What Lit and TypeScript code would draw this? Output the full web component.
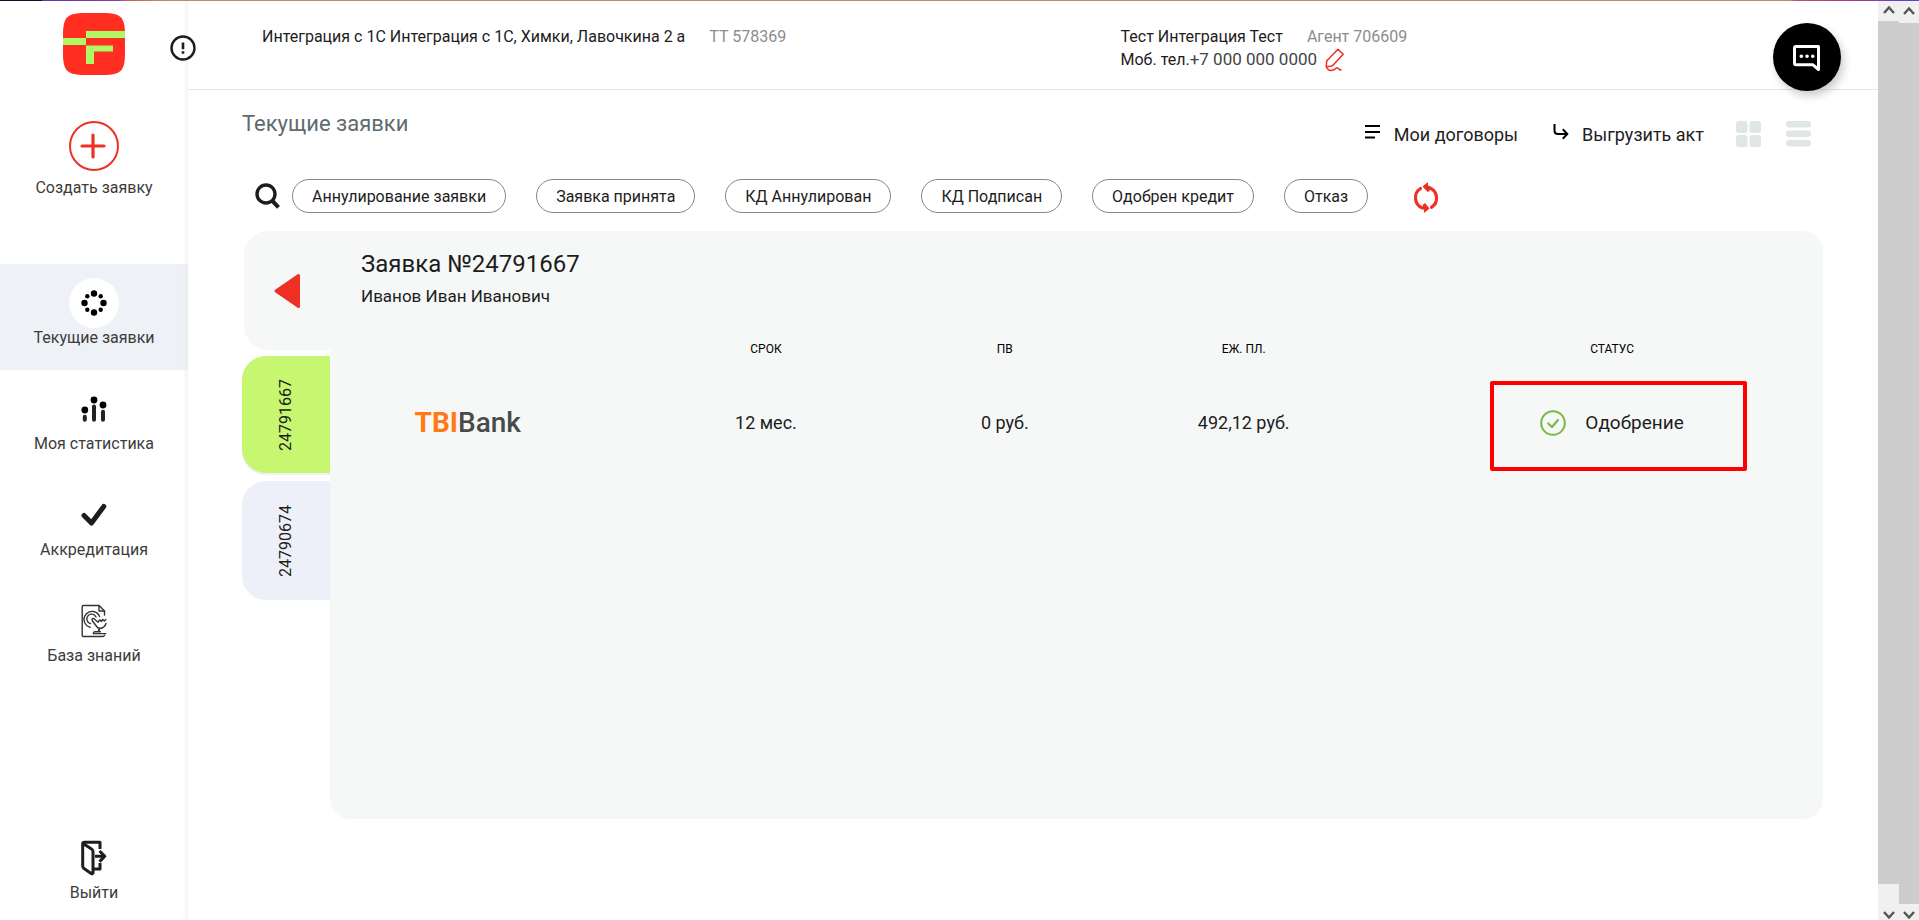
import { LitElement, html, css, svg } from "lit";
import { customElement, state } from "lit/decorators.js";
import { classMap } from "lit/directives/class-map.js";

const currentIcon = html`<svg width="26" height="26" viewBox="0 0 26 26" aria-hidden="true">
  <circle cx="13" cy="3.5" r="3.2" /><circle cx="13" cy="22.5" r="3.2" />
  <circle cx="3.5" cy="13" r="3.2" /><circle cx="22.5" cy="13" r="3.2" />
  <circle cx="6.3" cy="6.3" r="2.2" /><circle cx="19.7" cy="6.3" r="2.2" />
  <circle cx="6.3" cy="19.7" r="2.2" /><circle cx="19.7" cy="19.7" r="2.2" />
</svg>`;

const statsIcon = html`<svg width="26" height="26" viewBox="0 0 26 26" aria-hidden="true">
  <circle cx="3.8" cy="14" r="3.4" /><circle cx="13" cy="4" r="3.4" /><circle cx="22" cy="9" r="3.4" />
  <path d="M3.8 20.8v3M13 10.5v13.3M22 15.8v8" stroke="#222" stroke-width="4" stroke-linecap="round" />
</svg>`;

const checkIcon = html`<svg width="26" height="24" viewBox="0 0 26 24" aria-hidden="true">
  <path d="M3 12.5l7.5 7.5L22.8 3.4" fill="none" stroke="#1d1d1d" stroke-width="5" stroke-linecap="round" stroke-linejoin="round" />
</svg>`;

const knowledgeIcon = html`<svg width="26" height="34" viewBox="0 0 26 34" fill="none" stroke="#333" stroke-width="1.4" stroke-linecap="round" stroke-linejoin="round" aria-hidden="true">
  <path d="M23.5 11V7L18 1.500H2.500Q1.200 1.500 1.200 2.800V31.200Q1.200 32.500 2.500 32.500H21.500Q23 32.500 23.500 31.200" />
  <path d="M18 1.500V7h5.500" />
  <path d="M9.200 23.200A8 8 0 1 1 18.500 12.500M9.500 19.600A4.800 4.800 0 1 1 15 13" />
  <path d="M25 19.500q-1.500 4.500-6 5l-1.500 1.800 1.800 1.500h-5.500q-1.500 0-1.500 1.800h12.500M19 24.500l-2.500-1-5.200-6.800q-.8-1.500.3-2.200 1-.4 2 .7l3.500 3 1.500-2.300 1.800 1.500 1.300-1.900 1.600 1.400 1.500-1.400" />
</svg>`;

const exitIcon = html`<svg width="26" height="36" viewBox="0 0 26 36" fill="none" stroke="#1d1d1d" stroke-width="3" stroke-linejoin="round" aria-hidden="true">
  <path d="M2 3.500L10.500 9Q12 10 12 11.500V32.500Q12 34.500 10.200 33.400L3 28.500Q1.700 27.500 1.700 26V4Q1.700 2.200 3.500 2.200H19V9" />
  <path d="M12 29H19V23" />
  <path d="M14 16.300H23M18.500 11l5.300 5.300L18.500 21.600" />
</svg>`;

const NAV = [
  { label: "Текущие заявки", icon: currentIcon },
  { label: "Моя статистика", icon: statsIcon },
  { label: "Аккредитация", icon: checkIcon },
  { label: "База знаний", icon: knowledgeIcon },
];

const FILTERS = [
  "Аннулирование заявки",
  "Заявка принята",
  "КД Аннулирован",
  "КД Подписан",
  "Одобрен кредит",
  "Отказ",
];

const REQUESTS = ["24791667", "24790674"];

const chevron = (d: string) => html`<svg width="12" height="9" viewBox="0 0 12 9" aria-hidden="true">
  ${svg`<path d=${d} fill="none" stroke="#555" stroke-width="2.400" />`}
</svg>`;
const up = chevron("M1 8L6 2.500L11 8");
const down = chevron("M1 1L6 6.500L11 1");

@customElement("app-root")
export class AppRoot extends LitElement {
  @state() private section = 0;
  @state() private request = 0;

  static styles = css`
    :host {
      display: flex;
      flex-direction: column;
      min-height: 100vh;
      background: #fff;
      color: #1d1d1d;
      font: 16px/24px Roboto, "Liberation Sans", sans-serif;
    }
    *, *::before, *::after { box-sizing: border-box; }
    button, a {
      font: inherit;
      color: inherit;
      background: none;
      border: 0;
      padding: 0;
      margin: 0;
      text-decoration: none;
      cursor: pointer;
    }
    svg { display: block; flex: none; }
    h1, h2, p { margin: 0; font-weight: 400; }

    .stripe {
      height: 1px;
      background: linear-gradient(90deg, #1c0b2b 42px, #5f35ae 42px, #8a3f9b 120px, #b4557c 122px, #bf7659 140px, #b98a76 168px, #b98a76 1790px, #b45a68 1795px, #ab3687 1850px, #6a40c2 1895px);
    }
    .shell { display: flex; flex: 1; }

    .sidebar {
      position: relative;
      display: flex;
      flex-direction: column;
      align-items: center;
      width: 188px;
      padding: 12px 0 17px;
      color: #3c3c3c;
      line-height: 20px;
      box-shadow: inset -6px 0 6px -5px rgba(0, 0, 0, 0.08);
    }
    .sidebar nav { align-self: stretch; margin-top: 66px; }
    .alert { position: absolute; top: 34px; left: 169px; }
    .create, .nav-item, .exit {
      display: flex;
      flex-direction: column;
      align-items: center;
    }
    .create { gap: 7px; margin-top: 46px; }
    .nav-item { height: 106px; padding-top: 14px; }
    .nav-item.active { background: rgba(222, 229, 239, 0.5); }
    .exit { margin-top: auto; }
    .icon {
      display: flex;
      align-items: center;
      justify-content: center;
      width: 50px;
      height: 50px;
      border-radius: 50%;
    }
    .active .icon { background: #fff; }

    .main { flex: 1; min-width: 0; }
    .header {
      position: relative;
      display: grid;
      grid-template-columns: 17fr 15fr;
      min-height: 89px;
      padding: 24px 0 0 74px;
      border-bottom: 1px solid #e6e6e6;
      line-height: 23px;
    }
    .line { display: flex; align-items: center; height: 23px; }
    .line .muted { margin-left: 24px; }
    .muted { color: #8c8c8c; }
    .phone { color: #444; margin-right: 8px; font-size: 17px; }
    .chat {
      position: absolute;
      top: 22px;
      right: 37px;
      display: flex;
      align-items: center;
      justify-content: center;
      width: 68px;
      height: 68px;
      border-radius: 50%;
      background: #000;
      box-shadow: 3px 5px 8px rgba(0, 0, 0, 0.2);
    }

    .content { padding: 20px 55px 0 54px; }
    .toolbar { display: flex; justify-content: space-between; line-height: 28px; }
    .toolbar h1 { font-size: 22px; color: #5f6b6e; }
    .actions {
      display: flex;
      align-items: flex-start;
      padding: 11px 12px 0 0;
      font-size: 18px;
    }
    .actions a { display: flex; gap: 13px; }
    .actions a svg { margin-top: 3px; }
    .actions a + a { margin-left: 35px; }
    .actions button { margin-left: 25px; }
    .actions a + button { margin-left: 32px; }

    .filters { display: flex; align-items: center; padding-left: 13px; margin-top: 30px; }
    .tags { display: flex; gap: 30px; margin: 0 45px 0 12px; }
    .tag {
      height: 34px;
      padding: 1px 19px 0;
      border: 1px solid #868686;
      border-radius: 17px;
      white-space: nowrap;
    }

    .panel { display: flex; margin-top: 18px; }
    .tabs { width: 88px; }
    .back, .tab {
      display: flex;
      align-items: center;
      justify-content: center;
      width: 88px;
      border-radius: 24px 0 0 24px;
    }
    .back { width: 86px; height: 119px; margin-left: 2px; background: #f6f8f8; }
    .tab { height: 119px; margin-top: 6px; background: #edf0f8; }
    .tab.active { height: 117px; background: #c7f671; box-shadow: 0 2px 0 #edf0f8; }
    .tab.active + .tab { margin-top: 8px; }
    .tab span { writing-mode: vertical-rl; transform: rotate(180deg); }

    .details {
      flex: 1;
      min-width: 0;
      min-height: calc(100vh - 332px);
      padding-top: 17px;
      border-radius: 0 20px 20px 20px;
      background: #f6f8f8;
    }
    .details h2 { padding-left: 31px; font-size: 24px; line-height: 32px; }
    .client { padding-left: 31px; margin-top: 4px; font-size: 17px; }
    table {
      width: 100%;
      margin-top: 33px;
      border-collapse: collapse;
      table-layout: fixed;
      text-align: center;
    }
    th { padding: 0; font-size: 12px; line-height: 16px; font-weight: 400; color: #000; }
    td { padding: 53px 0 0; font-size: 18px; }
    .col-bank { width: 21.2%; }
    .col-num { width: 16%; }
    .last { padding-left: 38px; }
    .bank { padding-right: 41px; font-size: 28px; font-weight: 500; color: #4a4a4a; line-height: 24px; white-space: nowrap; }
    .bank b { color: #ff7a14; font-weight: 700; }
    .status { position: relative; display: inline-flex; align-items: center; gap: 19px; vertical-align: top; font-size: 19px; }
    .mark {
      position: absolute;
      inset: -29px -63px -35px -50px;
      border: 4px solid #f00;
      border-radius: 2px;
      pointer-events: none;
    }

    .bars { display: flex; }
    .bar {
      display: flex;
      flex-direction: column;
      justify-content: space-between;
      background: #cdcdcd;
    }
    .bar i { display: flex; justify-content: center; background: #f0f0f0; }
    .bar-inner { width: 21px; }
    .bar-outer { width: 20px; }
    .bar-inner i { height: 20px; padding-top: 4px; }
    .bar-outer i { height: 22px; padding-top: 5px; }
    .bar-inner i:last-child { height: 36px; padding-top: 27px; }
    .bar-outer i:last-child { height: 16px; padding-top: 7px; }
  `;

  render() {
    return html`
      <div class="stripe"></div>
      <div class="shell">
        <aside class="sidebar">
          <svg width="62" height="62" viewBox="0 0 62 62" role="img" aria-label="Логотип">
            <path d="M0 22C0 4 4 0 22 0h18C58 0 62 4 62 22v18c0 18-4 22-22 22H22C4 62 0 58 0 40z" fill="#ff2e20" />
            <path d="M0 25h23v-7h39v7H23v7H0z" fill="#b0f766" />
            <path d="M23 32.500h27v6H31V51h-8z" fill="#b0f766" />
          </svg>
          <button class="alert" aria-label="Уведомления">
            <svg width="28" height="28" viewBox="0 0 28 28">
              <circle cx="14" cy="13" r="11.500" fill="#fff" stroke="#1d1d1d" stroke-width="2.400" />
              <path d="M14 7.500v6.800M14 16.300v2.400" stroke="#1d1d1d" stroke-width="2.600" />
            </svg>
          </button>
          <button class="create">
            <svg width="52" height="50" viewBox="0 0 52 50" fill="none" stroke="#ee3124" aria-hidden="true">
              <circle cx="26" cy="25" r="24" stroke-width="2" />
              <path d="M25 14v22M14 25h22" stroke-width="3.200" stroke-linecap="round" />
            </svg>
            Создать заявку
          </button>
          <nav>
            ${NAV.map(
              (item, i) => html`<a
                href="#"
                class=${classMap({ "nav-item": true, active: i === this.section })}
                @click=${(e: Event) => { e.preventDefault(); this.section = i; }}
                ><span class="icon">${item.icon}</span>${item.label}</a
              >`
            )}
          </nav>
          <button class="exit"><span class="icon">${exitIcon}</span>Выйти</button>
        </aside>

        <main class="main">
          <header class="header">
            <div class="line-group">
              <div class="line">Интеграция с 1С Интеграция с 1С, Химки, Лавочкина 2 а <span class="muted">ТТ 578369</span></div>
            </div>
            <div class="line-group">
              <div class="line">Тест Интеграция Тест <span class="muted">Агент 706609</span></div>
              <div class="line">
                Моб. тел.<span class="phone">+7 000 000 0000</span>
                <button aria-label="Изменить телефон">
                  <svg width="20" height="24" viewBox="0 0 20 24" fill="none" stroke="#ee3124" stroke-width="1.500" stroke-linecap="round" stroke-linejoin="round">
                    <path d="M1.200 18.500L1.800 12.700L13 1.200L18.200 6.300L8.200 17Q7 18.500 1.200 18.500Q3 23.200 7 22.300Q9 22 10.500 20.600Q13 18.800 14 21.300Q14.800 22.200 16 21.800" />
                  </svg>
                </button>
              </div>
            </div>
            <button class="chat" aria-label="Чат">
              <svg width="30" height="30" viewBox="0 0 30 30" fill="none" stroke="#fff" stroke-width="3" stroke-linejoin="round">
                <path d="M4 4.500H26.500V27.500L21 22.800H4Q2.500 22.800 2.500 21.300V6Q2.500 4.500 4 4.500z" />
                <path d="M9.300 14.200h.1M15 14.200h.1M20.700 14.200h.1" stroke-width="3.600" stroke-linecap="round" />
              </svg>
            </button>
          </header>

          <section class="content">
            <div class="toolbar">
              <h1>Текущие заявки</h1>
              <div class="actions">
                <a href="#">
                  <svg width="16" height="16" viewBox="0 0 16 16" stroke="#000" stroke-width="2" aria-hidden="true">
                    <path d="M0 2h15M0 8h15M0 13.500h10" />
                  </svg>
                  Мои договоры
                </a>
                <a href="#">
                  <svg width="16" height="16" viewBox="0 0 16 16" fill="none" stroke="#000" stroke-width="2" aria-hidden="true">
                    <path d="M1.500 0V6.500Q1.500 10 5 10H14M9.800 5.200L14.300 10L9.800 14.800" />
                  </svg>
                  Выгрузить акт
                </a>
                <button aria-label="Плитка">
                  <svg width="25" height="26" viewBox="0 0 25 26" fill="#e0e6e4">
                    <rect width="11.500" height="12" rx="3" /><rect x="13.500" width="11.500" height="12" rx="3" />
                    <rect y="14" width="11.500" height="12" rx="3" /><rect x="13.500" y="14" width="11.500" height="12" rx="3" />
                  </svg>
                </button>
                <button aria-label="Список">
                  <svg width="25" height="26" viewBox="0 0 25 26" fill="#e0e6e4">
                    <rect width="25" height="6.500" rx="3" /><rect y="9.500" width="25" height="6.500" rx="3" /><rect y="19" width="25" height="6.500" rx="3" />
                  </svg>
                </button>
              </div>
            </div>

            <div class="filters">
              <button aria-label="Поиск">
                <svg width="25" height="26" viewBox="0 0 25 26" fill="none" stroke="#1d1d1d" stroke-width="3.400">
                  <circle cx="11" cy="11" r="9" /><path d="M17.500 18l6 6.300" stroke-width="4" />
                </svg>
              </button>
              <div class="tags">${FILTERS.map((f) => html`<button class="tag">${f}</button>`)}</div>
              <button aria-label="Обновить">
                <svg width="26" height="34" viewBox="0 -2 26 34">
                  <path d="M7.500 7.500A11 11 0 0 0 9.500 27M18.500 26.300A11 11 0 0 0 16.500 6.800" fill="none" stroke="#ee3124" stroke-width="3.200" stroke-linecap="round" />
                  <path d="M9.500 5.500L15 1v3.200l2.500 1.800-1 4-1.800 1zM16.500 27.500L11 32v-3l-1.500-2 .5-3.500 2-1.500z" fill="#ee3124" />
                </svg>
              </button>
            </div>

            <div class="panel">
              <div class="tabs">
                <button class="back" aria-label="Назад">
                  <svg width="26" height="36" viewBox="0 0 26 36">
                    <path d="M2 18L24.500 2.500V33.500z" fill="#ee3124" stroke="#ee3124" stroke-width="3" stroke-linejoin="round" />
                  </svg>
                </button>
                ${REQUESTS.map(
                  (n, i) => html`<button
                    class=${classMap({ tab: true, active: i === this.request })}
                    @click=${() => (this.request = i)}
                  ><span>${n}</span></button>`
                )}
              </div>
              <article class="details">
                <h2>Заявка №24791667</h2>
                <p class="client">Иванов Иван Иванович</p>
                <table>
                  <thead>
                    <tr>
                      <th class="col-bank"></th>
                      <th class="col-num">СРОК</th>
                      <th class="col-num">ПВ</th>
                      <th class="col-num">ЕЖ. ПЛ.</th>
                      <th class="last">СТАТУС</th>
                    </tr>
                  </thead>
                  <tbody>
                    <tr>
                      <td class="bank"><b>TBI</b>Bank</td>
                      <td>12 мес.</td>
                      <td>0 руб.</td>
                      <td>492,12 руб.</td>
                      <td class="last">
                        <span class="status">
                          <svg width="26" height="26" viewBox="0 0 26 26" fill="none" stroke="#7ab83e" aria-hidden="true">
                            <circle cx="13" cy="13" r="11.800" stroke-width="2" />
                            <path d="M8.200 13.500l3.800 3.500 6-7" stroke-width="2.200" stroke-linecap="round" stroke-linejoin="round" />
                          </svg>
                          Одобрение
                          <span class="mark"></span>
                        </span>
                      </td>
                    </tr>
                  </tbody>
                </table>
              </article>
            </div>
          </section>
        </main>

        <div class="bars" aria-hidden="true">
          <div class="bar bar-inner"><i>${up}</i><i>${down}</i></div>
          <div class="bar bar-outer"><i>${up}</i><i>${down}</i></div>
        </div>
      </div>
    `;
  }
}
